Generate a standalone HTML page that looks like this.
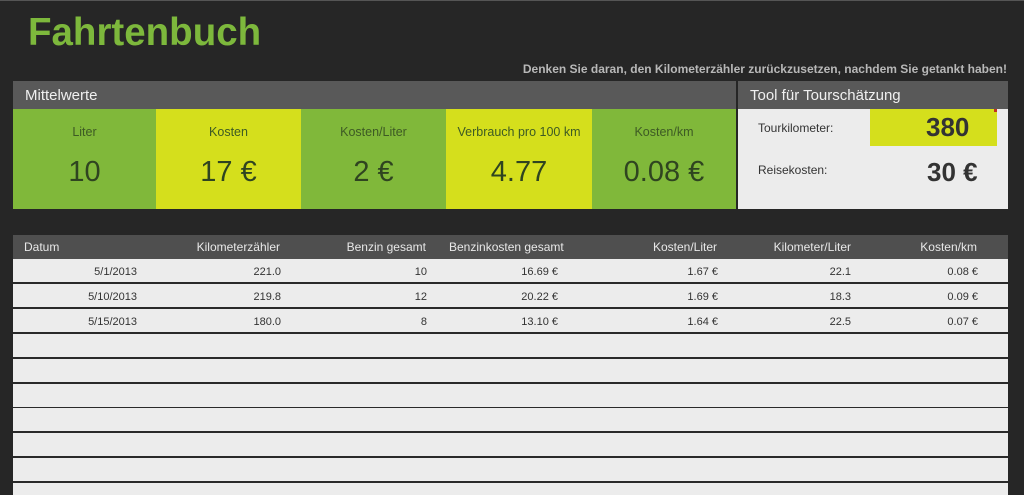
<!DOCTYPE html>
<html style="width:1024px;height:495px;overflow:hidden"><head><meta charset="utf-8"><style>
*{margin:0;padding:0;box-sizing:border-box}
body{width:1024px;height:495px;background:#262626;font-family:"Liberation Sans",sans-serif;position:relative;overflow:hidden}
.a{position:absolute}
.title{left:28px;top:11px;font-size:38.5px;font-weight:bold;color:#7db83c;letter-spacing:0}
.note{right:17px;top:62px;font-size:12px;font-weight:bold;color:#b8b8b8}
.hdr{background:#595959;color:#f0f0f0;font-size:15px;padding:6px 0 0 12px;height:28px}
.tile{top:109px;height:100px;text-align:center;color:#2f4420}
.tile .l{font-size:12.5px;margin-top:16px;color:#3d5a24}
.tile .v{font-size:29px;margin-top:17px}
.g{background:#80b83a}.y{background:#d5df1c}
.row{left:13px;width:995px;height:25px;background:#ececec;border-bottom:2px solid #2a2a2a;font-size:11px;color:#333}
.row span,.th span{position:absolute;top:7px}
.th{left:13px;top:235px;width:995px;height:24px;background:#4f4f4f;color:#e8e8e8;font-size:12px}
.th span{top:5px}
</style></head><body>
<div class="a" style="left:0;top:0;width:1024px;height:1px;background:#555"></div>
<div class="a title">Fahrtenbuch</div>
<div class="a note">Denken Sie daran, den Kilometerzähler zurückzusetzen, nachdem Sie getankt haben!</div>

<div class="a hdr" style="left:13px;top:81px;width:723px">Mittelwerte</div>
<div class="a tile g" style="left:13px;width:143px"><div class="l">Liter</div><div class="v">10</div></div>
<div class="a tile y" style="left:156px;width:145px"><div class="l">Kosten</div><div class="v">17 €</div></div>
<div class="a tile g" style="left:301px;width:145px"><div class="l">Kosten/Liter</div><div class="v">2 €</div></div>
<div class="a tile y" style="left:446px;width:146px"><div class="l">Verbrauch pro 100 km</div><div class="v">4.77</div></div>
<div class="a tile g" style="left:592px;width:144px"><div class="l">Kosten/km</div><div class="v">0.08 €</div></div>

<div class="a hdr" style="left:738px;top:81px;width:270px">Tool für Tourschätzung</div>
<div class="a" style="left:738px;top:109px;width:270px;height:100px;background:#ececec"></div>
<div class="a" style="left:870px;top:109px;width:127px;height:37px;background:#d5df1c"></div>
<div class="a" style="left:994px;top:109px;width:3px;height:3px;background:#c03020"></div>
<div class="a" style="left:758px;top:121px;font-size:12px;color:#333">Tourkilometer:</div>
<div class="a" style="left:926px;top:112px;font-size:26px;font-weight:bold;color:#333">380</div>
<div class="a" style="left:758px;top:163px;font-size:12px;color:#333">Reisekosten:</div>
<div class="a" style="left:927px;top:157px;font-size:26px;font-weight:bold;color:#333">30 €</div>

<div class="a th">
<span style="left:11px">Datum</span>
<span style="right:728px">Kilometerzähler</span>
<span style="right:582px">Benzin gesamt</span>
<span style="left:436px">Benzinkosten gesamt</span>
<span style="right:291px">Kosten/Liter</span>
<span style="right:157px">Kilometer/Liter</span>
<span style="right:31px">Kosten/km</span>
</div>
<div class="a row" style="top:259px"><span style="right:871px">5/1/2013</span><span style="right:727px">221.0</span><span style="right:581px">10</span><span style="right:450px">16.69 €</span><span style="right:290px">1.67 €</span><span style="right:157px">22.1</span><span style="right:30px">0.08 €</span></div>
<div class="a row" style="top:284px"><span style="right:871px">5/10/2013</span><span style="right:727px">219.8</span><span style="right:581px">12</span><span style="right:450px">20.22 €</span><span style="right:290px">1.69 €</span><span style="right:157px">18.3</span><span style="right:30px">0.09 €</span></div>
<div class="a row" style="top:309px"><span style="right:871px">5/15/2013</span><span style="right:727px">180.0</span><span style="right:581px">8</span><span style="right:450px">13.10 €</span><span style="right:290px">1.64 €</span><span style="right:157px">22.5</span><span style="right:30px">0.07 €</span></div>
<div class="a row" style="top:334px"></div>
<div class="a row" style="top:359px"></div>
<div class="a row" style="top:384px"></div>
<div class="a row" style="top:408px"></div>
<div class="a row" style="top:433px"></div>
<div class="a row" style="top:458px"></div>
<div class="a row" style="top:483px;height:12px;border:none"></div>
</body></html>
